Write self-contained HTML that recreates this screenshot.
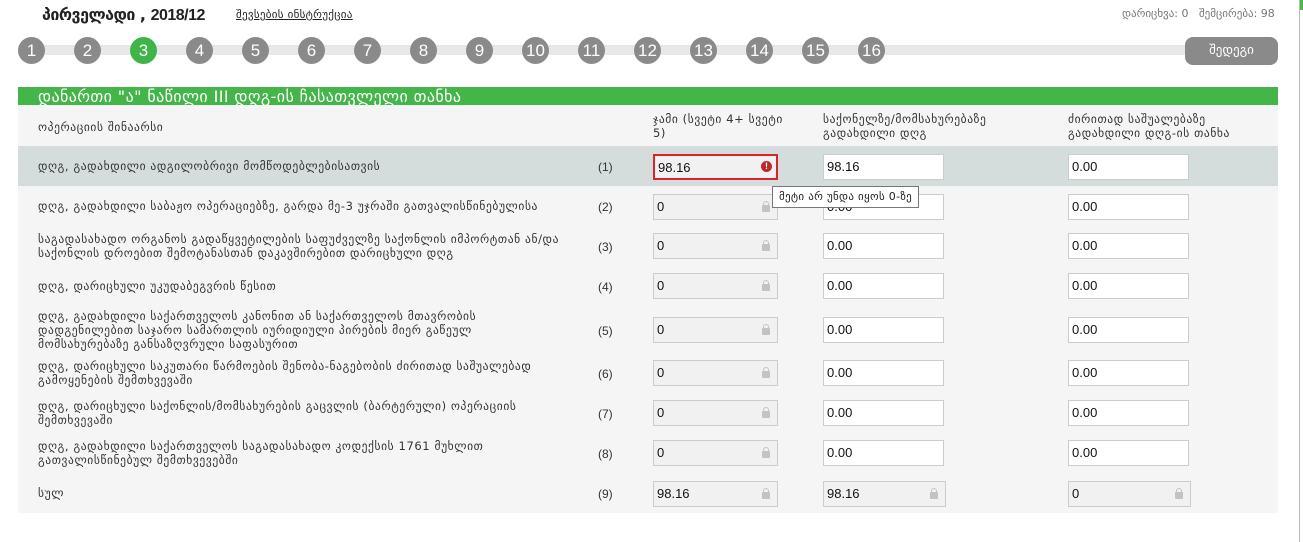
<!DOCTYPE html>
<html><head><meta charset="utf-8"><style>
body{margin:0;width:1303px;height:542px;background:#fff;position:relative;overflow:hidden;font-family:"Liberation Sans","DejaVu Sans",sans-serif;color:#222}
.a{position:absolute}
.ge{font-family:"DejaVu Sans",sans-serif;font-size:11.5px;letter-spacing:0.6px;line-height:14px;color:#333}
.c{position:absolute;width:27px;height:27px;border-radius:50%;background:#8a8a8a;color:#fff;font-size:17px;line-height:27px;text-align:center;top:37px}
.in{position:absolute;border:1px solid #ccc;background:#fff;font-size:13px;line-height:24px;padding-left:3px;box-sizing:border-box;height:26px;color:#111}
.lk{background:#f1f1f1}
.lk:after{content:"";position:absolute;right:7px;top:10px;width:8px;height:7px;background:#c3c3c3;border-radius:1px}
.lk:before{content:"";position:absolute;right:8px;top:6px;width:4px;height:5px;border:1px solid #c3c3c3;border-bottom:none;border-radius:3px 3px 0 0}
.n{position:absolute;left:598px;font-size:12px;color:#333}
</style></head><body>
<div class="a" style="left:1299px;top:0;width:1px;height:542px;background:#bbb"></div>
<div class="a" style="left:1300px;top:0;width:3px;height:10px;background:#4cb848"></div>
<div class="a" style="left:42px;top:5px;font-size:16px;font-weight:bold;font-family:'DejaVu Sans',sans-serif;letter-spacing:-0.5px">პირველადი , <span style="font-family:'Liberation Sans'">2018/12</span></div>
<div class="a ge" style="left:236px;top:8px;text-decoration:underline;color:#222;font-size:11px;letter-spacing:0.3px">შევსების ინსტრუქცია</div>
<div class="a ge" style="left:1122px;top:7px;color:#777;font-size:11px;letter-spacing:0">დარიცხვა: 0 &nbsp; შემცირება: 98</div>
<div class="a" style="left:18px;top:45px;width:1260px;height:10px;background:#e8e8e8"></div>
<div class="c" style="left:18px">1</div><div class="c" style="left:74px">2</div><div class="c" style="left:130px;background:#3fb549">3</div><div class="c" style="left:186px">4</div><div class="c" style="left:242px">5</div><div class="c" style="left:298px">6</div><div class="c" style="left:354px">7</div><div class="c" style="left:410px">8</div><div class="c" style="left:466px">9</div><div class="c" style="left:522px">10</div><div class="c" style="left:578px">11</div><div class="c" style="left:634px">12</div><div class="c" style="left:690px">13</div><div class="c" style="left:746px">14</div><div class="c" style="left:802px">15</div><div class="c" style="left:858px">16</div>
<div class="a ge" style="left:1185px;top:37px;width:93px;height:28px;border-radius:8px;background:#8a8a8a;color:#fff;font-size:13px;line-height:28px;text-align:center;letter-spacing:0">შედეგი</div>
<div class="a" style="left:18px;top:87px;width:1260px;height:426px;background:#f5f5f5"></div>
<div class="a ge" style="left:18px;top:87px;width:1260px;height:18px;background:#44b549;color:#fff;font-size:16px;letter-spacing:0.4px;line-height:19px;padding-left:20px;box-sizing:border-box">დანართი "ა" ნაწილი III დღგ-ის ჩასათვლელი თანხა</div>
<div class="a ge" style="left:38px;top:120px">ოპერაციის შინაარსი</div>
<div class="a ge" style="left:653px;top:112px;width:140px">ჯამი (სვეტი 4+ სვეტი 5)</div>
<div class="a ge" style="left:823px;top:112px">საქონელზე/მომსახურებაზე<br>გადახდილი დღგ</div>
<div class="a ge" style="left:1068px;top:112px">ძირითად საშუალებაზე<br>გადახდილი დღგ-ის თანხა</div>
<div class="a" style="left:18px;top:146px;width:1260px;height:40px;background:#d5dcdc"></div>

<div class="a ge" style="left:38px;top:159px">დღგ, გადახდილი ადგილობრივი მომწოდებლებისათვის</div><div class="n" style="top:160px">(1)</div>
<div class="in" style="left:653px;top:154px;width:125px;border:2px solid #d9232a;background:#f1f1f1"><span>98.16</span><span class="a" style="right:4px;top:5px;width:11px;height:11px;border-radius:50%;background:#c0272d;color:#fff;font-size:9px;line-height:11px;text-align:center;font-weight:bold">!</span></div>
<div class="in" style="left:823px;top:154px;width:121px">98.16</div>
<div class="in" style="left:1068px;top:154px;width:121px">0.00</div>

<div class="a ge" style="left:38px;top:199px">დღგ, გადახდილი საბაჟო ოპერაციებზე, გარდა მე-3 უჯრაში გათვალისწინებულისა</div><div class="n" style="top:200px">(2)</div>
<div class="in lk" style="left:653px;top:194px;width:125px">0</div><div class="in" style="left:823px;top:194px;width:121px">0.00</div><div class="in" style="left:1068px;top:194px;width:121px">0.00</div>

<div class="a ge" style="left:38px;top:232px">საგადასახადო ორგანოს გადაწყვეტილების საფუძველზე საქონლის იმპორტთან ან/და<br>საქონლის დროებით შემოტანასთან დაკავშირებით დარიცხული დღგ</div><div class="n" style="top:240px">(3)</div>
<div class="in lk" style="left:653px;top:233px;width:125px">0</div><div class="in" style="left:823px;top:233px;width:121px">0.00</div><div class="in" style="left:1068px;top:233px;width:121px">0.00</div>

<div class="a ge" style="left:38px;top:279px">დღგ, დარიცხული უკუდაბეგვრის წესით</div><div class="n" style="top:280px">(4)</div>
<div class="in lk" style="left:653px;top:273px;width:125px">0</div><div class="in" style="left:823px;top:273px;width:121px">0.00</div><div class="in" style="left:1068px;top:273px;width:121px">0.00</div>

<div class="a ge" style="left:38px;top:309px">დღგ, გადახდილი საქართველოს კანონით ან საქართველოს მთავრობის<br>დადგენილებით საჯარო სამართლის იურიდიული პირების მიერ გაწეულ<br>მომსახურებაზე განსაზღვრული საფასურით</div><div class="n" style="top:324px">(5)</div>
<div class="in lk" style="left:653px;top:317px;width:125px">0</div><div class="in" style="left:823px;top:317px;width:121px">0.00</div><div class="in" style="left:1068px;top:317px;width:121px">0.00</div>

<div class="a ge" style="left:38px;top:359px">დღგ, დარიცხული საკუთარი წარმოების შენობა-ნაგებობის ძირითად საშუალებად<br>გამოყენების შემთხვევაში</div><div class="n" style="top:367px">(6)</div>
<div class="in lk" style="left:653px;top:360px;width:125px">0</div><div class="in" style="left:823px;top:360px;width:121px">0.00</div><div class="in" style="left:1068px;top:360px;width:121px">0.00</div>

<div class="a ge" style="left:38px;top:399px">დღგ, დარიცხული საქონლის/მომსახურების გაცვლის (ბარტერული) ოპერაციის<br>შემთხვევაში</div><div class="n" style="top:407px">(7)</div>
<div class="in lk" style="left:653px;top:400px;width:125px">0</div><div class="in" style="left:823px;top:400px;width:121px">0.00</div><div class="in" style="left:1068px;top:400px;width:121px">0.00</div>

<div class="a ge" style="left:38px;top:439px">დღგ, გადახდილი საქართველოს საგადასახადო კოდექსის 1761 მუხლით<br>გათვალისწინებულ შემთხვევებში</div><div class="n" style="top:447px">(8)</div>
<div class="in lk" style="left:653px;top:440px;width:125px">0</div><div class="in" style="left:823px;top:440px;width:121px">0.00</div><div class="in" style="left:1068px;top:440px;width:121px">0.00</div>

<div class="a ge" style="left:38px;top:486px">სულ</div><div class="n" style="top:487px">(9)</div>
<div class="in lk" style="left:653px;top:481px;width:125px">98.16</div><div class="in lk" style="left:823px;top:481px;width:123px">98.16</div><div class="in lk" style="left:1068px;top:481px;width:123px">0</div>

<div class="a ge" style="left:772px;top:186px;border:1px solid #777;background:#fff;padding:3px 6px;font-size:11px;letter-spacing:0.3px;color:#222">მეტი არ უნდა იყოს 0-ზე</div>
</body></html>
